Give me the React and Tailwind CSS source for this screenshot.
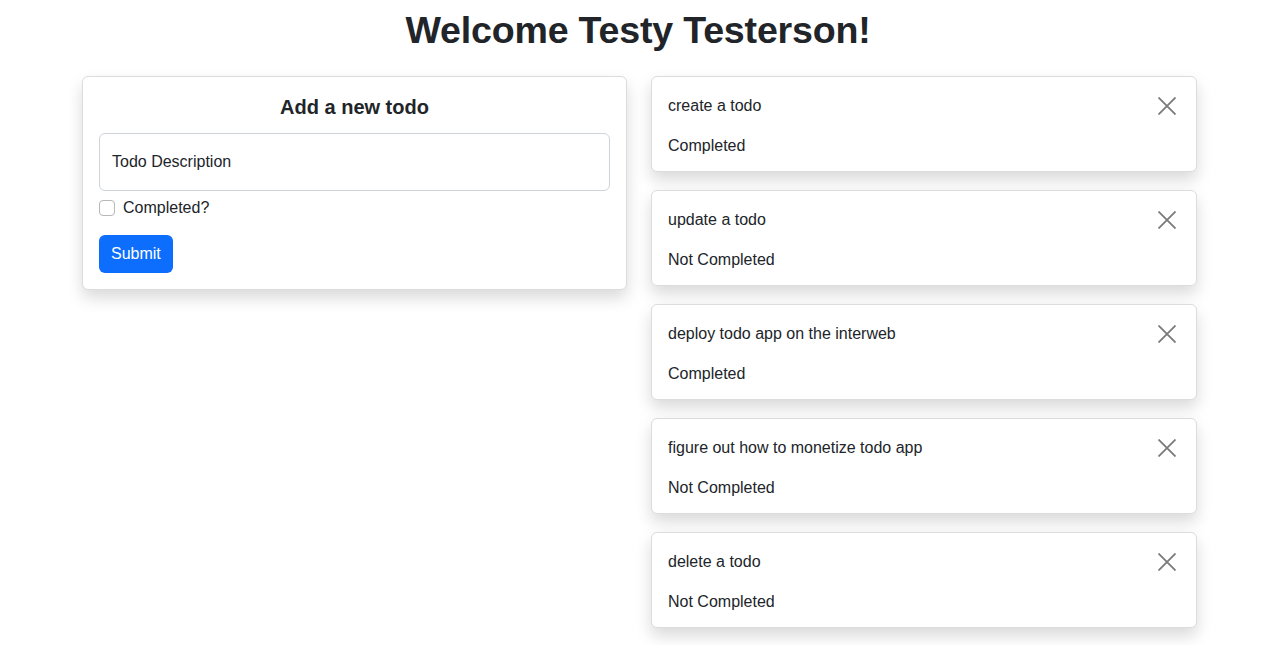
import React from "react";

const todos = [
  { text: "create a todo", done: true },
  { text: "update a todo", done: false },
  { text: "deploy todo app on the interweb", done: true },
  { text: "figure out how to monetize todo app", done: false },
  { text: "delete a todo", done: false },
];

function CloseIcon() {
  return (
    <svg width="18" height="18" viewBox="0 0 16 16" className="block">
      <path d="M1 1L15 15M15 1L1 15" stroke="#7a7a7a" strokeWidth="1.6" strokeLinecap="square" />
    </svg>
  );
}

export default function App() {
  return (
    <div
      className="min-h-[645px] bg-white text-[#212529]"
      style={{ fontFamily: '"Liberation Sans", Arial, sans-serif' }}
    >
      <h1 className="text-center text-[37.6px] font-semibold leading-[1.2] pt-[8px] pb-[23px] pr-[8px] tracking-[-0.2px]">
        Welcome Testy Testerson!
      </h1>
      <div className="flex gap-[24px] pl-[82px]">
        <div className="w-[545px] self-start rounded-[6px] border border-[#dcdcdc] bg-white pt-[17px] px-[16px] pb-[16px] shadow-[0_8px_16px_rgba(0,0,0,0.15)]">
          <h5 className="text-center text-[20px] font-semibold leading-[24px] pt-[1px] mb-[14px]">Add a new todo</h5>
          <div className="h-[58px] rounded-[6px] border border-[#ced4da] flex items-center pl-[12px] text-[16px]">
            Todo Description
          </div>
          <div className="flex items-center mt-[9px] h-[16px]">
            <span className="w-[16px] h-[16px] rounded-[4px] border border-[#b8b8b8] bg-white" />
            <span className="ml-[8px] text-[16px] leading-[24px]">Completed?</span>
          </div>
          <button className="mt-[19px] h-[38px] px-[12px] rounded-[6px] bg-[#0d6efd] text-white text-[16px] leading-[24px]">
            Submit
          </button>
        </div>
        <div className="w-[546px] flex flex-col gap-[18px]">
          {todos.map((t) => (
            <div
              key={t.text}
              className="rounded-[6px] border border-[#dcdcdc] bg-white px-[16px] pt-[17px] pb-[13px] shadow-[0_8px_16px_rgba(0,0,0,0.15)]"
            >
              <div className="flex items-center justify-between h-[24px]">
                <span className="text-[16px] leading-[24px]">{t.text}</span>
                <span className="mr-[4px]"><CloseIcon /></span>
              </div>
              <div className="mt-[16px] text-[16px] leading-[24px]">{t.done ? "Completed" : "Not Completed"}</div>
            </div>
          ))}
        </div>
      </div>
    </div>
  );
}
